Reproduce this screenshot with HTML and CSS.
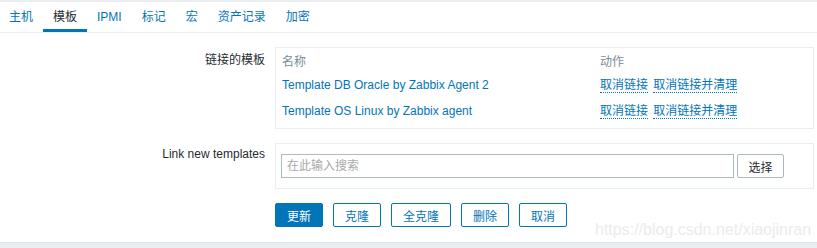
FILE: index.html
```html
<!DOCTYPE html>
<html lang="zh-CN">

<head>
    <meta charset="UTF-8">
    <title>模板</title>
    <link rel="stylesheet" href="styles.css">
</head>

<body>
    <div class="page">
        <ul class="tabs">
            <li><a href="#">主机</a></li>
            <li class="active"><a href="#">模板</a></li>
            <li><a href="#">IPMI</a></li>
            <li><a href="#">标记</a></li>
            <li><a href="#">宏</a></li>
            <li><a href="#">资产记录</a></li>
            <li><a href="#">加密</a></li>
        </ul>

        <div class="form">
            <div class="form-label first">链接的模板</div>
            <div class="form-field">
                <div class="box linked">
                    <table class="linked-table">
                        <thead>
                            <tr>
                                <th class="col-name">名称</th>
                                <th>动作</th>
                            </tr>
                        </thead>
                        <tbody>
                            <tr>
                                <td><a href="#" class="link">Template DB Oracle by Zabbix Agent 2</a></td>
                                <td>
                                    <a href="#" class="link dotted">取消链接</a>
                                    <a href="#" class="link dotted">取消链接并清理</a>
                                </td>
                            </tr>
                            <tr>
                                <td><a href="#" class="link">Template OS Linux by Zabbix agent</a></td>
                                <td>
                                    <a href="#" class="link dotted">取消链接</a>
                                    <a href="#" class="link dotted">取消链接并清理</a>
                                </td>
                            </tr>
                        </tbody>
                    </table>
                </div>
            </div>

            <div class="form-label">Link new templates</div>
            <div class="form-field">
                <div class="box search">
                    <input type="text" class="search-input" placeholder="在此输入搜索">
                    <button class="btn-grey">选择</button>
                </div>
            </div>

            <div></div>
            <div class="button-container">
                <button class="btn-main">更新</button>
                <button class="btn-alt">克隆</button>
                <button class="btn-alt">全克隆</button>
                <button class="btn-alt">删除</button>
                <button class="btn-alt">取消</button>
            </div>
        </div>

        <div class="footer"></div>
        <span class="watermark">https://blog.csdn.net/xiaojinran</span>
    </div>
</body>

</html>
```

FILE: styles.css
```css
body {
    margin: 0;
    font-family: "Liberation Sans", Arial, "Noto Sans CJK SC", sans-serif;
    font-size: 12px;
    color: #1f2c33;
    background: #fff;
}

.page {
    position: relative;
    height: 248px;
    overflow: hidden;
    border-top: 2px solid #ebeef0;
    box-sizing: border-box;
}

a {
    text-decoration: none;
}

/* tabs */
.tabs {
    display: flex;
    list-style: none;
    margin: 0 0 0 -1px;
    padding: 0;
    height: 30px;
    border-bottom: 1px solid #ebeef0;
}

.tabs li {
    padding: 0 10px;
    line-height: 30px;
}

.tabs a {
    color: #0275b8;
}

.tabs li.active {
    box-shadow: inset 0 -3px 0 #0275b8;
}

.tabs li.active a {
    color: #1f2c33;
}

/* form */
.form {
    display: grid;
    grid-template-columns: 265px 1fr;
    column-gap: 10px;
    row-gap: 14px;
    padding: 14px 3px 0 0;
}

.form-label {
    text-align: right;
    line-height: 14px;
    padding-top: 4px;
}

.form-label.first {
    padding-top: 6px;
}

.box {
    border: 1px solid #ebeef0;
}

.linked {
    padding: 1px 6px 4px;
}

.linked-table {
    border-collapse: collapse;
}

.linked-table th {
    font-weight: normal;
    color: #768d99;
    text-align: left;
    height: 23px;
    padding: 0;
}

.linked-table .col-name {
    width: 318px;
}

.linked-table td {
    height: 26px;
    padding: 0;
    white-space: nowrap;
}

.link {
    color: #0275b8;
}

.dotted {
    display: inline-block;
    line-height: 14px;
    border-bottom: 1px dotted #0275b8;
    margin-right: 2px;
}

.search {
    display: flex;
    align-items: center;
    gap: 3px;
    padding: 10px 5px;
}

.search-input {
    width: 453px;
    height: 24px;
    box-sizing: border-box;
    border: 1px solid #acbbc2;
    border-radius: 0;
    padding: 0 5px;
    font: inherit;
    color: #1f2c33;
    margin: 0;
}

.search-input::placeholder {
    color: #a7a9ab;
}

/* buttons */
button {
    height: 24px;
    padding: 0 11px;
    font: inherit;
    border-radius: 2px;
    cursor: pointer;
    margin: 0;
}

.btn-grey {
    width: 47px;
    padding: 0;
    background: #fff;
    border: 1px solid #acbbc2;
    color: #1f2c33;
}

.button-container {
    display: flex;
    gap: 10px;
}

.btn-main {
    background-color: #0275b8;
    border: 1px solid #0275b8;
    color: white;
}

.btn-alt {
    background: #fff;
    border: 1px solid #0275b8;
    color: #0275b8;
}

.footer {
    position: absolute;
    left: 0;
    right: 0;
    bottom: 0;
    height: 5px;
    background: #ebeef0;
    border-top: 1px solid #dfe4e7;
}

.watermark {
    position: absolute;
    left: 595px;
    top: 219px;
    font-size: 16px;
    color: #ebebeb;
    white-space: nowrap;
}
```
